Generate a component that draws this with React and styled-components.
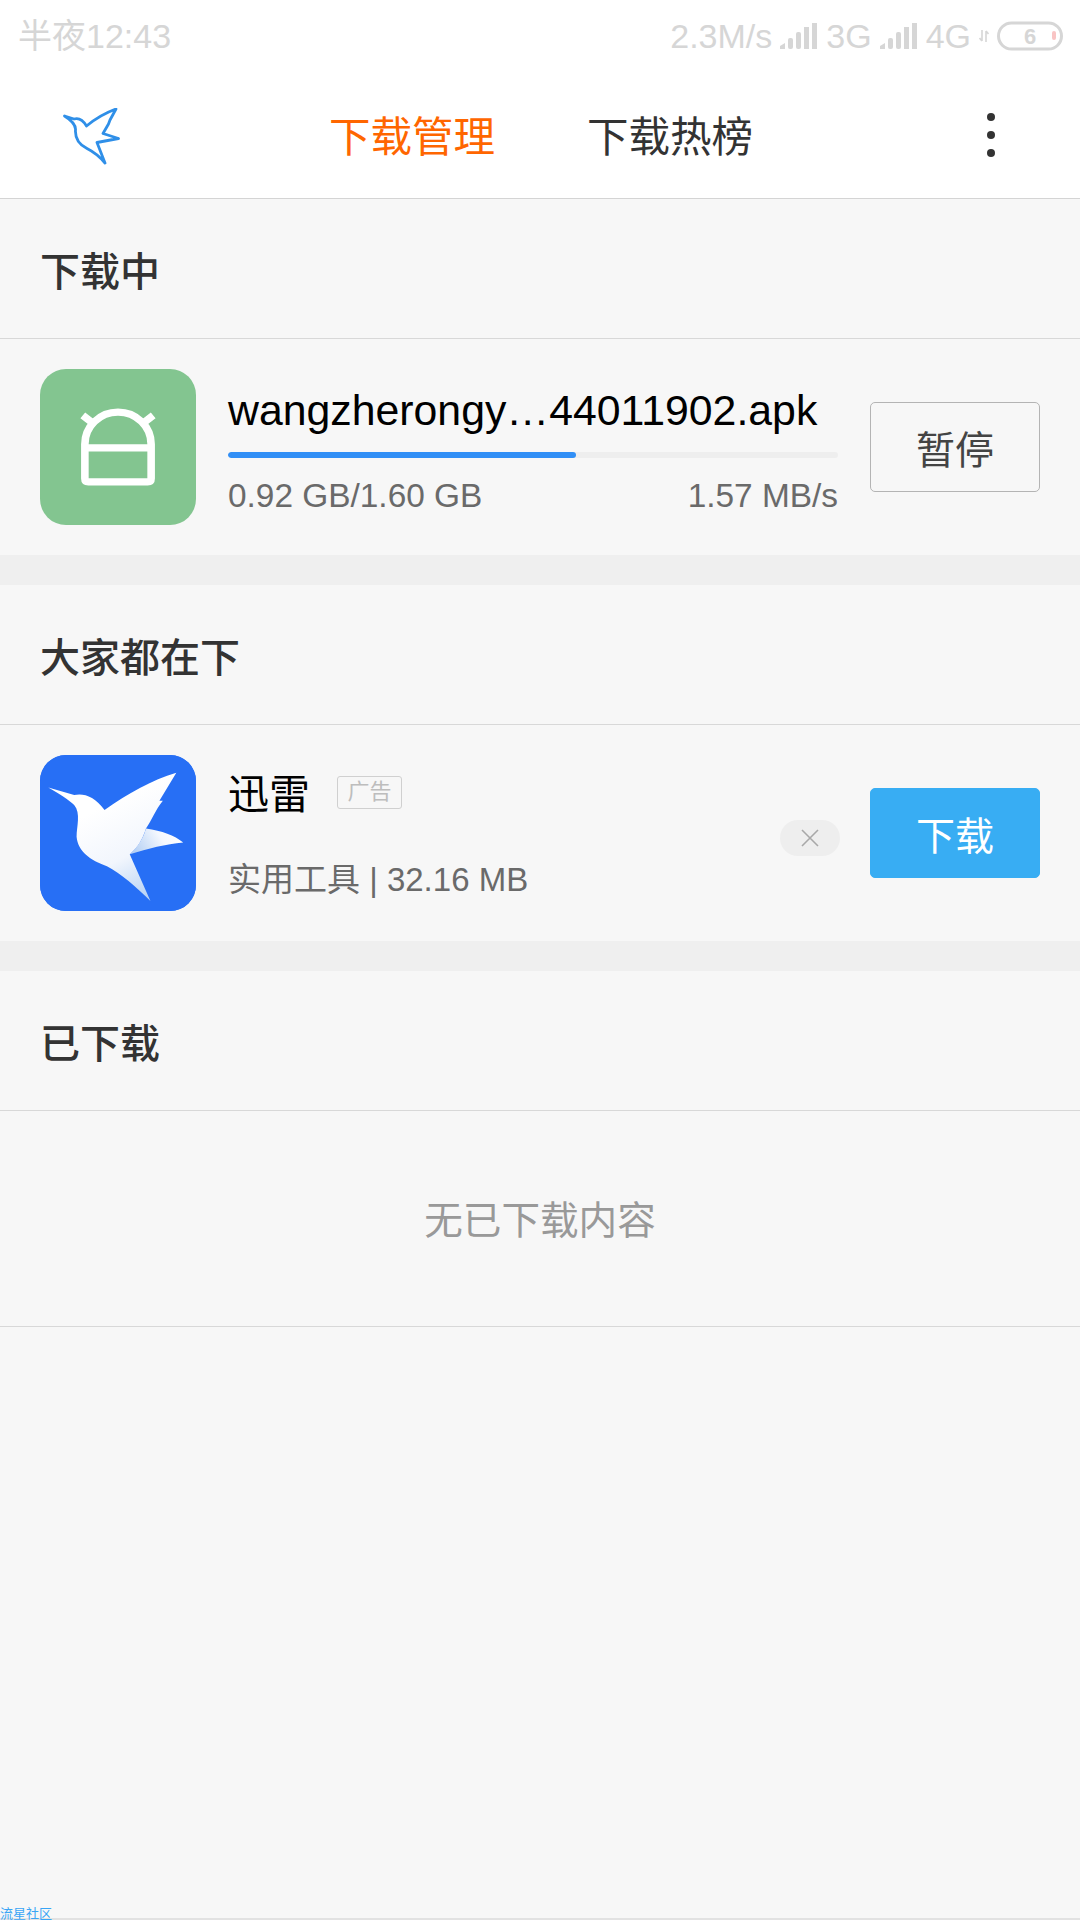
import React from "react";
import styled, { createGlobalStyle } from "styled-components";

const LATIN = `"Liberation Sans", "Noto Sans CJK SC", sans-serif`;

const GlobalStyle = createGlobalStyle`
  html, body {
    margin: 0;
    padding: 0;
    background: #f7f7f7;
  }
  body {
    font-family: ${LATIN};
  }
`;

const Screen = styled.div`
  position: relative;
  width: 1080px;
  height: 1920px;
  overflow: hidden;
  background: #f7f7f7;
  display: flex;
  flex-direction: column;
`;

const Top = styled.header`
  background: #fff;
  border-bottom: 1px solid #d4d4d4;
  height: 198px;
  display: flex;
  flex-direction: column;
`;

const StatusBar = styled.div`
  height: 72px;
  padding: 0 17px 0 18px;
  display: flex;
  align-items: center;
  justify-content: space-between;
  color: #d6d6d6;
`;

const StatusTime = styled.span`
  font-size: 34px;
  line-height: 74px;
`;

const StatusRight = styled.div`
  display: flex;
  align-items: center;
  gap: 8px;
  font-size: 34px;
  line-height: 72px;
`;

const Toolbar = styled.nav`
  flex: 1;
  display: flex;
  align-items: center;
  padding-left: 63px;
`;

const BirdSlot = styled.div`
  margin-top: 4px;
  display: flex;
`;

const Tabs = styled.div`
  display: flex;
  gap: 92px;
  margin-left: 206px;
  margin-top: 5px;
`;

const Tab = styled.span`
  font-size: 41.5px;
  line-height: 60px;
  color: ${(p) => (p.$active ? "#ff6600" : "#333")};
`;

const MenuDots = styled.div`
  margin-left: auto;
  margin-right: 85px;
  display: flex;
  flex-direction: column;
  gap: 10px;
  span {
    width: 8px;
    height: 8px;
    border-radius: 50%;
    background: #333;
  }
`;

const SectionHead = styled.div`
  height: 140px;
  box-sizing: border-box;
  border-bottom: 1px solid #d8d8d8;
  padding-left: 40px;
  display: flex;
  align-items: center;
  font-size: 40px;
  font-weight: 500;
  color: #333;
`;

const Row = styled.div`
  height: 216px;
  display: flex;
  align-items: center;
  padding: 0 40px;
`;

const AppIcon = styled.div`
  width: 156px;
  height: 156px;
  flex: none;
  border-radius: 26px;
  overflow: hidden;
  background: ${(p) => p.$color};
  svg {
    display: block;
  }
`;

const Gap = styled.div`
  height: 30px;
  background: #efefef;
`;

const Progress = styled.div`
  width: 610px;
  margin-left: 32px;
  margin-right: 32px;
  padding-top: 8px;
`;

const FileName = styled.div`
  font-size: 42.8px;
  line-height: 50px;
  color: #000;
  white-space: nowrap;
`;

const Track = styled.div`
  height: 6px;
  margin-top: 17px;
  border-radius: 3px;
  background: #eeeeee;
  overflow: hidden;
`;

const Fill = styled.div`
  height: 100%;
  border-radius: 3px;
  background: #318ff6;
`;

const Stats = styled.div`
  display: flex;
  justify-content: space-between;
  margin-top: 17px;
  font-size: 33.4px;
  line-height: 42px;
  color: #6a6a6a;
`;

const ActionButton = styled.div`
  width: 170px;
  height: 90px;
  flex: none;
  box-sizing: border-box;
  display: flex;
  align-items: center;
  justify-content: center;
  border-radius: 5px;
  font-size: 39px;
  border: 1px solid ${(p) => (p.$primary ? "#38adf3" : "#b4b4b4")};
  background: ${(p) => (p.$primary ? "#38adf3" : "transparent")};
  color: ${(p) => (p.$primary ? "#fff" : "#444")};
`;

const Info = styled.div`
  flex: 1;
  margin-left: 32px;
`;

const NameLine = styled.div`
  display: flex;
  align-items: center;
  gap: 27px;
  font-size: 41px;
  line-height: 60px;
  color: #000;
`;

const AdTag = styled.span`
  width: 65px;
  height: 33px;
  margin-bottom: 5px;
  box-sizing: border-box;
  border: 1px solid #d0d0d0;
  border-radius: 3px;
  display: flex;
  align-items: center;
  justify-content: center;
  font-size: 22px;
  color: #bdbdbd;
`;

const SubLine = styled.div`
  margin-top: 33px;
  font-size: 33px;
  line-height: 44px;
  color: #6a6a6a;
  white-space: nowrap;
`;

const DismissPill = styled.div`
  width: 60px;
  height: 36px;
  margin-right: 30px;
  margin-top: 10px;
  border-radius: 18px;
  background: #eeeeee;
  display: flex;
  align-items: center;
  justify-content: center;
`;

const Empty = styled.div`
  height: 216px;
  box-sizing: border-box;
  padding-bottom: 4px;
  border-bottom: 1px solid #d8d8d8;
  display: flex;
  align-items: center;
  justify-content: center;
  font-size: 38.6px;
  color: #999;
`;

const Watermark = styled.span`
  position: absolute;
  left: 0;
  bottom: -2px;
  font-size: 13px;
  line-height: 16px;
  color: #3aa5f5;
`;

const BottomEdge = styled.div`
  position: absolute;
  left: 0;
  right: 0;
  bottom: 0;
  height: 2px;
  background: #e2e2e2;
`;

function Signal() {
  return (
    <svg width="38" height="28" viewBox="0 0 38 28" fill="#d6d6d6">
      <path d="M0 27v-3l5-3v6z" />
      <rect x="8" y="16" width="5" height="11" rx="2" />
      <rect x="16" y="10" width="5" height="17" rx="2" />
      <rect x="24" y="5" width="5" height="22" />
      <rect x="32" y="1" width="5" height="26" />
    </svg>
  );
}

function Arrows() {
  return (
    <svg width="10" height="12" viewBox="0 0 10 12" stroke="#d6d6d6" strokeWidth="1.6" fill="none">
      <path d="M3 0v11M0.5 8l2.5 3M7 12V1M9.5 4L7 1" />
    </svg>
  );
}

function Battery() {
  return (
    <svg width="66" height="30" viewBox="0 0 66 30">
      <rect x="1.5" y="2" width="63" height="26" rx="13" fill="none" stroke="#d6d6d6" strokeWidth="3" />
      <text x="33" y="23" textAnchor="middle" fontSize="22" fontWeight="700" fill="#d6d6d6" fontFamily="Liberation Sans, sans-serif">6</text>
      <rect x="55" y="10" width="4" height="9" rx="2" fill="#f9c4c4" />
    </svg>
  );
}

function BirdOutline() {
  return (
    <svg width="60" height="58" viewBox="60 108 60 58" fill="none" stroke="#2f8fe8" strokeWidth="2.8" strokeLinejoin="round" strokeLinecap="round">
      <path d="M61.5 116 L71 119 C76 117.5 80 120 83.5 126 C92 119 102 113 113 109 L107 120 L105.5 124 L100 133.5 L115.5 138.5 L94 142.5 L102 163 C97 157 91 152 84 148.5 C75 144 72 138 72.5 130 C73 124 68 120 61.5 116 Z" />
    </svg>
  );
}

function AndroidGlyph() {
  return (
    <svg width="156" height="156" viewBox="116 87 452 467" preserveAspectRatio="none" fill="none" stroke="#fff" strokeWidth="22">
      <path d="M246 312 A96 96 0 0 1 438 312 V415 Q438 425 428 425 H256 Q246 425 246 415 Z" strokeLinejoin="round" />
      <path d="M246 323 H438" />
      <path d="M240 226 L270 250 M444 226 L414 250" />
    </svg>
  );
}

function XunleiBird() {
  return (
    <svg width="156" height="156" viewBox="116 75 452 467" preserveAspectRatio="none">
      <defs>
        <linearGradient id="birdBody" x1="0.35" y1="0.3" x2="0.7" y2="1">
          <stop offset="0" stopColor="#ffffff" />
          <stop offset="0.55" stopColor="#f2f6fd" />
          <stop offset="1" stopColor="#b9d4f5" />
        </linearGradient>
        <linearGradient id="birdWing" x1="0" y1="0.6" x2="1" y2="0.3">
          <stop offset="0" stopColor="#b5d0f4" />
          <stop offset="0.6" stopColor="#f4f8fe" />
          <stop offset="1" stopColor="#ffffff" />
        </linearGradient>
      </defs>
      <rect x="116" y="75" width="452" height="467" fill="#276ff5" />
      <path d="M423 295 C470 302 505 315 531 337 C480 342 430 355 376 372 C400 350 415 325 423 295 Z" fill="url(#birdWing)" />
      <path
        d="M140 172 L215 195 C240 188 275 198 303 240 C370 190 440 150 511 128 L462 212 L472 212 C450 240 440 270 423 295 C412 330 400 350 376 372 L436 512 C395 470 350 430 310 408 C262 390 226 365 222 320 C222 290 235 250 215 225 C200 208 170 190 140 172 Z"
        fill="url(#birdBody)"
      />
    </svg>
  );
}

export default function App() {
  const downloaded = 0.57;

  return (
    <Screen>
      <GlobalStyle />
      <Top>
        <StatusBar>
          <StatusTime>半夜12:43</StatusTime>
          <StatusRight>
            <span>2.3M/s</span>
            <Signal />
            <span>3G</span>
            <Signal />
            <span>4G</span>
            <Arrows />
            <Battery />
          </StatusRight>
        </StatusBar>
        <Toolbar>
          <BirdSlot>
            <BirdOutline />
          </BirdSlot>
          <Tabs>
            <Tab $active>下载管理</Tab>
            <Tab>下载热榜</Tab>
          </Tabs>
          <MenuDots>
            <span />
            <span />
            <span />
          </MenuDots>
        </Toolbar>
      </Top>

      <SectionHead>下载中</SectionHead>
      <Row>
        <AppIcon $color="#83c590">
          <AndroidGlyph />
        </AppIcon>
        <Progress>
          <FileName>wangzherongy…44011902.apk</FileName>
          <Track>
            <Fill style={{ width: `${downloaded * 100}%` }} />
          </Track>
          <Stats>
            <span>0.92 GB/1.60 GB</span>
            <span>1.57 MB/s</span>
          </Stats>
        </Progress>
        <ActionButton>暂停</ActionButton>
      </Row>
      <Gap />

      <SectionHead>大家都在下</SectionHead>
      <Row>
        <AppIcon $color="#276ff5">
          <XunleiBird />
        </AppIcon>
        <Info>
          <NameLine>
            <span>迅雷</span>
            <AdTag>广告</AdTag>
          </NameLine>
          <SubLine>实用工具 | 32.16 MB</SubLine>
        </Info>
        <DismissPill>
          <svg width="18" height="18" viewBox="0 0 18 18" stroke="#a8a8a8" strokeWidth="1.6">
            <path d="M1 1L17 17M17 1L1 17" />
          </svg>
        </DismissPill>
        <ActionButton $primary>下载</ActionButton>
      </Row>
      <Gap />

      <SectionHead>已下载</SectionHead>
      <Empty>无已下载内容</Empty>

      <BottomEdge />
      <Watermark>流星社区</Watermark>
    </Screen>
  );
}
